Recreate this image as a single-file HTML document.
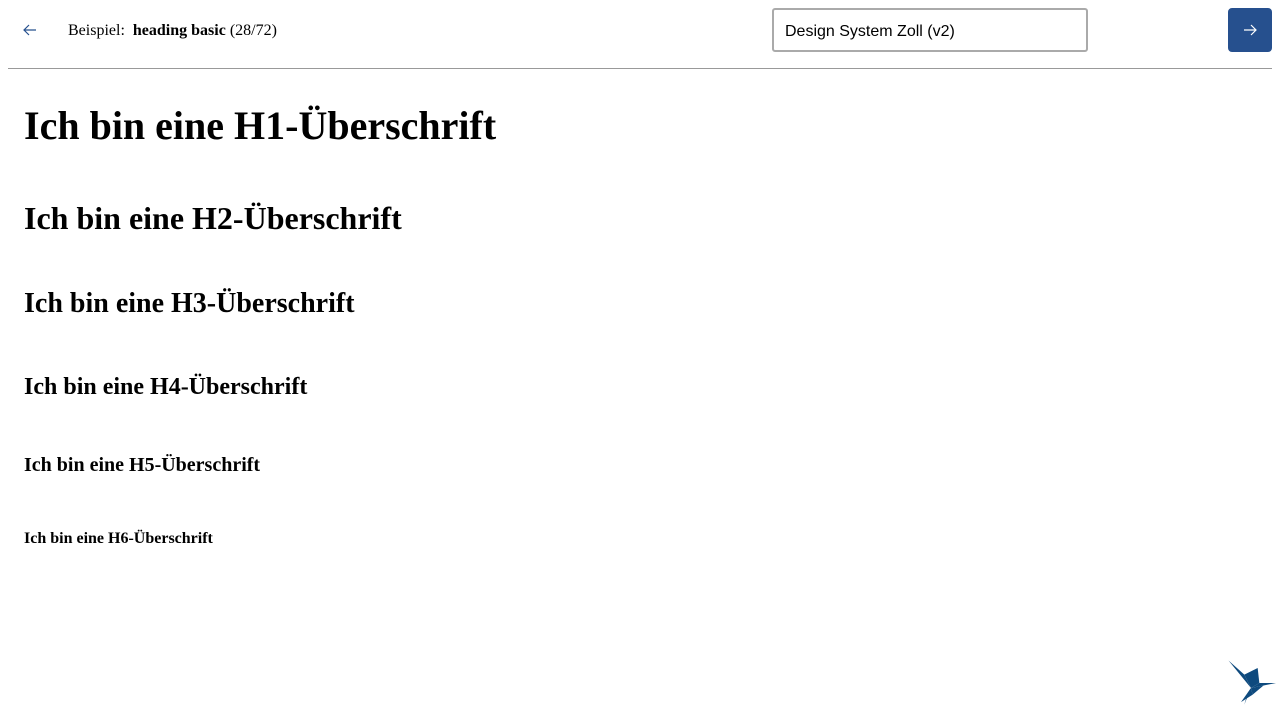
<!DOCTYPE html>
<html><head><meta charset="utf-8"><style>
body{margin:0;width:1280px;height:720px;background:#fff;position:relative;overflow:hidden;font-family:"Liberation Serif",serif;color:#000}
.a{position:absolute;white-space:nowrap}
h1,h2,h3,h4,h5,h6{margin:0;font-weight:bold;position:absolute;left:24px;white-space:nowrap}
</style></head><body>
<svg class="a" style="left:22px;top:22px" width="16" height="16" viewBox="0 0 16 16"><path d="M14 8H2M7 3L2 8l5 5" fill="none" stroke="#26508e" stroke-width="1.2"/></svg>
<div class="a" style="left:68px;top:22px;font-size:16px;line-height:18px">Beispiel:&nbsp; <b>heading basic</b> (28/72)</div>
<div class="a" style="left:772px;top:8px;height:40px;border:2px solid #aaa;border-radius:3px;font-family:'Liberation Sans',sans-serif;font-size:16px;line-height:44px;padding-left:11px;width:301px">Design System Zoll (v2)</div>
<div class="a" style="left:1228px;top:8px;width:44px;height:44px;background:#26508e;border-radius:4px"></div>
<svg class="a" style="left:1242px;top:22px" width="16" height="16" viewBox="0 0 16 16"><path d="M2 8h12M9 3l5 5-5 5" fill="none" stroke="#fff" stroke-width="1.2"/></svg>
<div class="a" style="left:8px;top:68px;width:1264px;height:1px;background:#999"></div>
<h1 style="font-size:40px;line-height:40px;top:106px">Ich bin eine H1-Überschrift</h1>
<h2 style="font-size:32px;line-height:32px;top:202px">Ich bin eine H2-Überschrift</h2>
<h3 style="font-size:28px;line-height:28px;top:290px">Ich bin eine H3-Überschrift</h3>
<h4 style="font-size:24px;line-height:24px;top:375px">Ich bin eine H4-Überschrift</h4>
<h5 style="font-size:20px;line-height:20px;top:455px">Ich bin eine H5-Überschrift</h5>
<h6 style="font-size:16px;line-height:16px;top:531px">Ich bin eine H6-Überschrift</h6>
<svg class="a" style="left:1226px;top:658px" width="50" height="50" viewBox="0 0 60 60">
<g fill="#0e4a7e">
<polygon points="3,3 22,20 30,36"/>
<polygon points="22,20 38,12 40,30 30,36"/>
<polygon points="30,36 40,30 60,30 45,33"/>
<polygon points="30,36 45,33 32,44"/>
<polygon points="30,36 32,44 18,53"/>
<polygon points="30,36 22,56 26,42"/>
</g></svg>
</body></html>
